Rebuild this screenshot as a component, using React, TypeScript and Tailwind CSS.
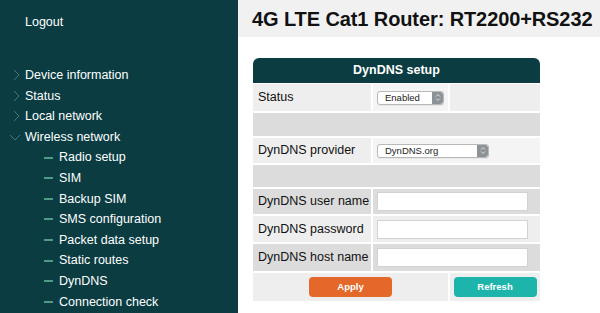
import { useState } from 'react';

type MenuItem = {
  label: string;
  open?: boolean;
  children?: string[];
};

const menu: MenuItem[] = [
  { label: 'Device information' },
  { label: 'Status' },
  { label: 'Local network' },
  {
    label: 'Wireless network',
    open: true,
    children: [
      'Radio setup',
      'SIM',
      'Backup SIM',
      'SMS configuration',
      'Packet data setup',
      'Static routes',
      'DynDNS',
      'Connection check',
    ],
  },
];

const Chevron = ({ open }: { open?: boolean }) =>
  open ? (
    <svg width="12" height="8" viewBox="0 0 12 8" className="absolute left-[9px] top-[7px]">
      <path d="M1 1l5 5 5-5" fill="none" stroke="#3f7c7e" strokeWidth="1" />
    </svg>
  ) : (
    <svg width="7" height="12" viewBox="0 0 7 12" className="absolute left-[13px] top-[4px]">
      <path d="M1 1l5 5-5 5" fill="none" stroke="#3f7c7e" strokeWidth="1" />
    </svg>
  );

const Sidebar = () => (
  <aside className="w-[238px] shrink-0 bg-[#0a3c41] text-white text-[12.5px] h-[313px] overflow-hidden">
    <div className="pl-[25px] pt-[13px] leading-[18px]">Logout</div>
    <ul className="mt-[34px]">
      {menu.map((item) => (
        <li key={item.label}>
          <div className="relative pl-[25px] h-[20.6px] leading-[20.6px]">
            <Chevron open={item.open} />
            {item.label}
          </div>
          {item.open && item.children && (
            <ul>
              {item.children.map((child) => (
                <li key={child} className="flex items-center h-[20.6px]">
                  <span className="ml-[44px] w-[9px] h-[2px] bg-[#4e9b88]" />
                  <span className="ml-[6px] leading-[20.6px]">{child}</span>
                </li>
              ))}
            </ul>
          )}
        </li>
      ))}
    </ul>
  </aside>
);

const Stepper = () => (
  <span className="absolute right-0 top-0 bottom-0 w-[11px] bg-[#8d9297] rounded-r-[3px] flex items-center justify-center">
    <svg width="6" height="9" viewBox="0 0 6 9">
      <path d="M1 3.5l2-2 2 2M1 5.5l2 2 2-2" fill="none" stroke="#e6e6e6" strokeWidth="0.9" />
    </svg>
  </span>
);

const Select = ({ value, width }: { value: string; width: string }) => (
  <div
    className={`relative h-[14px] ${width} bg-white border border-[#b9b9b9] rounded-[3px] text-[9.5px] leading-[12px] pl-[7px] text-[#222] shadow-[0_1px_0_rgba(0,0,0,0.05)]`}
  >
    {value}
    <Stepper />
  </div>
);

const TextInput = () => (
  <input
    type="text"
    className="w-[151px] h-[19px] bg-white border border-[#d2d2d2] outline-none"
  />
);

const Label = ({ text, dark }: { text: string; dark?: boolean }) => (
  <div className={`flex items-center pl-[5px] ${dark ? 'bg-[#dcdcdc]' : 'bg-[#eeeeee]'}`}>
    {text}
  </div>
);

const App = () => {
  const [status] = useState('Enabled');
  const [provider] = useState('DynDNS.org');

  return (
    <div className="flex w-[600px] h-[313px] bg-white overflow-hidden font-['Liberation_Sans',Arial,sans-serif]">
      <Sidebar />
      <main className="flex-1">
        <div className="h-[37px] bg-[#f1f1f1] pl-[14px] pt-[7px]">
          <h1 className="text-[20px] font-bold leading-[24px] text-[#111] tracking-[-0.1px]">
            4G LTE Cat1 Router: RT2200+RS232
          </h1>
        </div>

        <div className="ml-[15px] mt-[21px] w-[287px] text-[12.5px] text-[#111]">
          <div className="h-[25px] bg-[#0a3c41] rounded-t-[6px] flex items-center justify-center text-white font-bold">
            DynDNS setup
          </div>
          <div className="grid grid-cols-[118px_75px_90px] gap-[2px] mt-[1px]">
            <div className="col-span-3 grid grid-cols-subgrid h-[27px]">
              <Label text="Status" />
              <div className="bg-[#f4f4f4] flex items-center pl-[4px]">
                <Select value={status} width="w-[67px]" />
              </div>
              <div className="bg-[#eeeeee]" />
            </div>

            <div className="col-span-3 h-[23px] bg-[#dcdcdc]" />

            <div className="col-span-3 grid grid-cols-subgrid h-[25px]">
              <Label text="DynDNS provider" />
              <div className="col-span-2 bg-[#f4f4f4] flex items-center pl-[4px]">
                <Select value={provider} width="w-[112px]" />
              </div>
            </div>

            <div className="col-span-3 h-[22px] bg-[#dcdcdc]" />

            <div className="col-span-3 grid grid-cols-subgrid h-[25px]">
              <Label text="DynDNS user name" dark />
              <div className="col-span-2 bg-[#dcdcdc] flex items-center pl-[4px]">
                <TextInput />
              </div>
            </div>

            <div className="col-span-3 grid grid-cols-subgrid h-[26px]">
              <Label text="DynDNS password" />
              <div className="col-span-2 bg-[#eeeeee] flex items-center pl-[4px]">
                <TextInput />
              </div>
            </div>

            <div className="col-span-3 grid grid-cols-subgrid h-[27px]">
              <Label text="DynDNS host name" dark />
              <div className="col-span-2 bg-[#dcdcdc] flex items-center pl-[4px]">
                <TextInput />
              </div>
            </div>

            <div className="col-span-3 grid grid-cols-subgrid h-[28px]">
              <div className="col-span-2 bg-[#eeeeee] flex items-center justify-center">
                <button className="w-[83px] h-[20px] rounded-[4px] bg-[#e3682a] text-white text-[9.5px] font-bold">
                  Apply
                </button>
              </div>
              <div className="bg-[#eeeeee] flex items-center justify-center">
                <button className="w-[83px] h-[20px] rounded-[4px] bg-[#1db4ac] text-white text-[9.5px] font-bold">
                  Refresh
                </button>
              </div>
            </div>
          </div>
        </div>
      </main>
    </div>
  );
};

export default App;
